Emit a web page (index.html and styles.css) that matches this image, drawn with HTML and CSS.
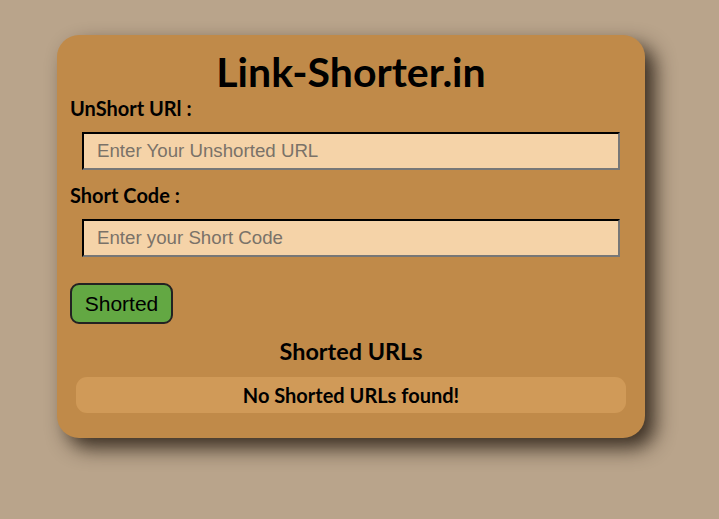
FILE: index.html
```html
<!DOCTYPE html>
<html>
<head>
<meta charset="utf-8">
<link rel="stylesheet" href="styles.css">
</head>
<body>
<div class="card">
  <h1 class="title">Link-Shorter.in</h1>
  <label class="label">UnShort URl :</label>
  <input class="field" type="text" placeholder="Enter Your Unshorted URL">
  <label class="label label-2">Short Code :</label>
  <input class="field" type="text" placeholder="Enter your Short Code">
  <div class="actions"><button class="btn">Shorted</button></div>
  <h2 class="subtitle">Shorted URLs</h2>
  <div class="empty">No Shorted URLs found!</div>
</div>
</body>
</html>
```

FILE: styles.css
```css
html, body {
  margin: 0;
  padding: 0;
}
body {
  background: #b9a48b;
  font-family: "Lato", sans-serif;
  width: 702px;
  height: 519px;
  overflow: hidden;
}
.card {
  box-sizing: border-box;
  width: 588px;
  margin: 35px 0 0 57px;
  padding: 12px 13px 25px;
  background: #c08a49;
  border-radius: 22px;
  box-shadow: 10px 10px 20px rgba(35, 25, 15, 0.85);
  display: flex;
  flex-direction: column;
}
.title {
  margin: 0;
  text-align: center;
  font-size: 41px;
  font-weight: 700;
  line-height: 49px;
  color: #000;
}
.label {
  display: block;
  font-size: 20px;
  font-weight: 700;
  line-height: 24px;
  color: #000;
}
.label-2 {
  margin-top: 13px;
}
.field {
  box-sizing: border-box;
  margin: 12px 12px 0;
  width: 538px;
  height: 38px;
  padding: 0 13px;
  background: #f5d3a8;
  border: 2px inset #777;
  border-top-color: #222;
  border-left-color: #222;
  border-right-color: #777;
  border-bottom-color: #777;
  font-family: "Liberation Sans", Arial, sans-serif;
  font-size: 18.7px;
  color: #000;
  outline: none;
}
.field::placeholder {
  color: #7a7268;
}
.actions {
  margin-top: 26px;
}
.btn {
  box-sizing: border-box;
  width: 103px;
  height: 41px;
  background: #63a843;
  border: 2px solid #222;
  border-radius: 9px;
  font-family: "Liberation Sans", Arial, sans-serif;
  font-size: 21px;
  color: #000;
  padding: 0;
}
.subtitle {
  margin: 14px 0 0;
  text-align: center;
  font-size: 23.4px;
  font-weight: 700;
  line-height: 26px;
}
.empty {
  margin: 13px 6px 0;
  height: 36px;
  background: #d09a58;
  border-radius: 11px;
  text-align: center;
  font-size: 20px;
  font-weight: 700;
  line-height: 36px;
}
```
